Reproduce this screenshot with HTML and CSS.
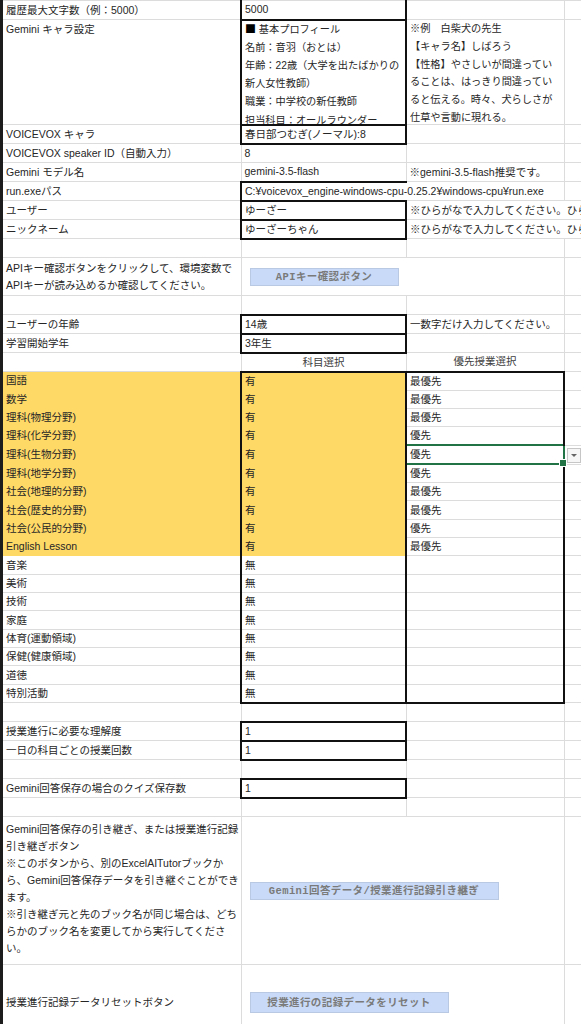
FILE: index.html
```html
<!DOCTYPE html>
<html lang="ja">
  <head>
    <meta charset="UTF-8" />
    <meta name="viewport" content="width=device-width, initial-scale=1.0" />
    <title>設定</title>
    <link rel="stylesheet" href="styles.css">
  </head>
  <body>
    <div class="sheet">
      <table class="grid">
        <colgroup>
          <col class="col-a" />
          <col class="col-b" />
          <col class="col-c" />
          <col class="col-d" />
        </colgroup>
        <tbody>
          <tr>
            <td>履歴最大文字数（例：5000）</td>
            <td class="box no-top">5000</td>
            <td class="green-top"></td>
            <td></td>
          </tr>
          <tr class="tall">
            <td class="top"><div class="clip">Gemini キャラ設定</div></td>
            <td class="box top">
              <div class="clip narrow">
                <span class="sq">■</span> 基本プロフィール<br />
                名前：音羽（おとは）<br />
                年齢：22歳（大学を出たばかりの<br />
                新人女性教師）<br />
                職業：中学校の新任教師<br />
                担当科目：オールラウンダー
              </div>
            </td>
            <td class="top">
              <div class="clip narrow note">
                ※例　白柴犬の先生<br />
                【キャラ名】しばろう<br />
                【性格】やさしいが間違ってい<br />
                ることは、はっきり間違ってい<br />
                ると伝える。時々、犬らしさが<br />
                仕草や言動に現れる。
              </div>
            </td>
            <td></td>
          </tr>
          <tr>
            <td>VOICEVOX キャラ</td>
            <td class="box">春日部つむぎ(ノーマル):8</td>
            <td></td>
            <td></td>
          </tr>
          <tr>
            <td>VOICEVOX speaker ID（自動入力）</td>
            <td>8</td>
            <td></td>
            <td></td>
          </tr>
          <tr>
            <td>Gemini モデル名</td>
            <td>gemini-3.5-flash</td>
            <td>※gemini-3.5-flash推奨です。</td>
            <td></td>
          </tr>
          <tr>
            <td>run.exeパス</td>
            <td class="box spill">C:¥voicevox_engine-windows-cpu-0.25.2¥windows-cpu¥run.exe</td>
            <td></td>
            <td></td>
          </tr>
          <tr>
            <td>ユーザー</td>
            <td class="box">ゆーざー</td>
            <td class="spill">※ひらがなで入力してください。ひら</td>
            <td></td>
          </tr>
          <tr>
            <td>ニックネーム</td>
            <td class="box">ゆーざーちゃん</td>
            <td class="spill">※ひらがなで入力してください。ひら</td>
            <td></td>
          </tr>
          <tr>
            <td></td>
            <td></td>
            <td></td>
            <td></td>
          </tr>
          <tr class="api">
            <td class="lines">
              APIキー確認ボタンをクリックして、環境変数で<br />
              APIキーが読み込めるか確認してください。
            </td>
            <td class="spill"><span class="btn btn-api">APIキー確認ボタン</span></td>
            <td></td>
            <td></td>
          </tr>
          <tr>
            <td></td>
            <td></td>
            <td></td>
            <td></td>
          </tr>
          <tr>
            <td>ユーザーの年齢</td>
            <td class="box">14歳</td>
            <td>一数字だけ入力してください。</td>
            <td></td>
          </tr>
          <tr>
            <td>学習開始学年</td>
            <td class="box">3年生</td>
            <td></td>
            <td></td>
          </tr>
          <tr>
            <td></td>
            <td class="head">科目選択</td>
            <td class="head">優先授業選択</td>
            <td></td>
          </tr>

          <!-- 必修科目 -->
          <tr class="sub">
            <td class="hl">国語</td>
            <td class="hl pick first">有</td>
            <td class="prio first">最優先</td>
            <td></td>
          </tr>
          <tr class="sub">
            <td class="hl">数学</td>
            <td class="hl pick">有</td>
            <td class="prio">最優先</td>
            <td></td>
          </tr>
          <tr class="sub">
            <td class="hl">理科(物理分野)</td>
            <td class="hl pick">有</td>
            <td class="prio">最優先</td>
            <td></td>
          </tr>
          <tr class="sub">
            <td class="hl">理科(化学分野)</td>
            <td class="hl pick">有</td>
            <td class="prio">優先</td>
            <td></td>
          </tr>
          <tr class="sub">
            <td class="hl">理科(生物分野)</td>
            <td class="hl pick">有</td>
            <td class="sel">優先</td>
            <td class="dd-cell"><span class="dd"></span></td>
          </tr>
          <tr class="sub">
            <td class="hl">理科(地学分野)</td>
            <td class="hl pick">有</td>
            <td class="prio">優先</td>
            <td></td>
          </tr>
          <tr class="sub">
            <td class="hl">社会(地理的分野)</td>
            <td class="hl pick">有</td>
            <td class="prio">最優先</td>
            <td></td>
          </tr>
          <tr class="sub">
            <td class="hl">社会(歴史的分野)</td>
            <td class="hl pick">有</td>
            <td class="prio">最優先</td>
            <td></td>
          </tr>
          <tr class="sub">
            <td class="hl">社会(公民的分野)</td>
            <td class="hl pick">有</td>
            <td class="prio">優先</td>
            <td></td>
          </tr>
          <tr class="sub">
            <td class="hl">English Lesson</td>
            <td class="hl pick">有</td>
            <td class="prio">最優先</td>
            <td></td>
          </tr>

          <!-- 選択科目 -->
          <tr class="sub">
            <td>音楽</td>
            <td class="pick">無</td>
            <td class="prio"></td>
            <td></td>
          </tr>
          <tr class="sub">
            <td>美術</td>
            <td class="pick">無</td>
            <td class="prio"></td>
            <td></td>
          </tr>
          <tr class="sub">
            <td>技術</td>
            <td class="pick">無</td>
            <td class="prio"></td>
            <td></td>
          </tr>
          <tr class="sub">
            <td>家庭</td>
            <td class="pick">無</td>
            <td class="prio"></td>
            <td></td>
          </tr>
          <tr class="sub">
            <td>体育(運動領域)</td>
            <td class="pick">無</td>
            <td class="prio"></td>
            <td></td>
          </tr>
          <tr class="sub">
            <td>保健(健康領域)</td>
            <td class="pick">無</td>
            <td class="prio"></td>
            <td></td>
          </tr>
          <tr class="sub">
            <td>道徳</td>
            <td class="pick">無</td>
            <td class="prio"></td>
            <td></td>
          </tr>
          <tr class="sub">
            <td>特別活動</td>
            <td class="pick last">無</td>
            <td class="prio last"></td>
            <td></td>
          </tr>

          <tr>
            <td></td>
            <td></td>
            <td></td>
            <td></td>
          </tr>
          <tr>
            <td>授業進行に必要な理解度</td>
            <td class="box">1</td>
            <td></td>
            <td></td>
          </tr>
          <tr>
            <td>一日の科目ごとの授業回数</td>
            <td class="box">1</td>
            <td></td>
            <td></td>
          </tr>
          <tr>
            <td></td>
            <td></td>
            <td></td>
            <td></td>
          </tr>
          <tr>
            <td>Gemini回答保存の場合のクイズ保存数</td>
            <td class="box">1</td>
            <td></td>
            <td></td>
          </tr>
          <tr>
            <td></td>
            <td></td>
            <td></td>
            <td></td>
          </tr>
          <tr class="big">
            <td class="top lines">
              Gemini回答保存の引き継ぎ、または授業進行記録<br />
              引き継ぎボタン<br />
              ※このボタンから、別のExcelAITutorブックか<br />
              ら、Gemini回答保存データを引き継ぐことができ<br />
              ます。<br />
              ※引き継ぎ元と先のブック名が同じ場合は、どち<br />
              らかのブック名を変更してから実行してくださ<br />
              い。
            </td>
            <td class="spill"><span class="btn btn-copy">Gemini回答データ/授業進行記録引き継ぎ</span></td>
            <td></td>
            <td></td>
          </tr>
          <tr class="reset">
            <td>授業進行記録データリセットボタン</td>
            <td class="spill"><span class="btn btn-reset">授業進行の記録データをリセット</span></td>
            <td></td>
            <td></td>
          </tr>
        </tbody>
      </table>
    </div>
  </body>
</html>
```

FILE: styles.css
```css
* {
  box-sizing: border-box;
}

html,
body {
  margin: 0;
  padding: 0;
  background: #fff;
  overflow: hidden;
}

body {
  font-family: "Liberation Sans", "Noto Sans CJK JP", sans-serif;
  font-size: 10.5px;
  color: #262626;
}

.sheet {
  width: 640px;
  border-left: 3px solid #1c1c1c;
}

.grid {
  border-collapse: collapse;
  table-layout: fixed;
  width: 637px;
}

.col-a {
  width: 238px;
}

.col-b {
  width: 165px;
}

.col-c {
  width: 158px;
}

.col-d {
  width: 76px;
}

.grid tr {
  height: 19px;
}

.grid td {
  border: 1px solid #dcdcdc;
  padding: 0 3px;
  line-height: 17px;
  white-space: nowrap;
  vertical-align: middle;
  overflow: visible;
}

.grid td:first-child {
  border-left: none;
  padding-left: 3px;
}

/* row heights */
.grid tr.tall {
  height: 104px;
}

.grid tr.api {
  height: 38px;
}

.grid tr.sub {
  height: 18.33px;
}

.grid tr.big {
  height: 148px;
}

.grid tr.reset {
  height: 76px;
}

.grid td.top {
  vertical-align: top;
}

.clip {
  height: 103px;
  overflow: hidden;
  line-height: 18.2px;
}

.narrow {
  font-size: 10.2px;
}

.clip.note {
  line-height: 17.8px;
}

.sq {
  font-family: "Noto Sans CJK JP", sans-serif;
  font-size: 11px;
  line-height: 1;
  color: #000;
}

.lines {
  line-height: 16.8px;
}

.big .lines {
  padding-top: 4px;
}

.head {
  text-align: center;
  color: #404040;
}

/* thick input frames */
.box {
  border: 2px solid #111 !important;
}

.no-top {
  border-top: 1px solid #dcdcdc !important;
}

.green-top {
  border-top: 1px solid #2f7d52;
}

/* text running into the next cell */
.grid td.spill {
  border-right-style: hidden;
}

.grid td.box.spill {
  border-right-style: hidden !important;
}

/* subject table */
.hl {
  background: #ffd966;
  border-top-color: #ffd966 !important;
  border-bottom-color: #ffd966 !important;
}

.pick,
.prio {
  border-left: 2px solid #111 !important;
  border-right: 2px solid #111 !important;
}

.pick.first,
.prio.first {
  border-top: 2px solid #111 !important;
}

.pick.last,
.prio.last {
  border-bottom: 2px solid #111 !important;
}

.sel {
  position: relative;
  border: 2px solid #217346 !important;
  border-left-color: #111 !important;
}

.sel::after {
  content: "";
  position: absolute;
  right: -4px;
  bottom: -4px;
  width: 6px;
  height: 6px;
  background: #217346;
  border: 1px solid #fff;
}

.grid td.dd-cell {
  padding: 0 0 0 2px;
}

.dd {
  display: inline-block;
  vertical-align: middle;
  width: 14px;
  height: 15px;
  border: 1px solid #c6c6c6;
  background: #f6f6f6;
  position: relative;
}

.dd::after {
  content: "";
  position: absolute;
  left: 3px;
  top: 5px;
  border-left: 3px solid transparent;
  border-right: 3px solid transparent;
  border-top: 3px solid #666;
}

/* shape buttons */
.btn {
  display: inline-block;
  vertical-align: middle;
  margin-left: 5px;
  height: 18px;
  line-height: 17px;
  background: #c9daf8;
  border: 1px solid #b9c9e4;
  color: #7a7a7a;
  font-family: "Liberation Mono", "Noto Sans CJK JP", monospace;
  font-weight: bold;
  letter-spacing: 0.4px;
  text-align: center;
}

.btn-api {
  width: 149px;
}

.btn-copy {
  width: 249px;
}

.btn-reset {
  width: 199px;
  height: 21px;
  line-height: 20px;
}
```
